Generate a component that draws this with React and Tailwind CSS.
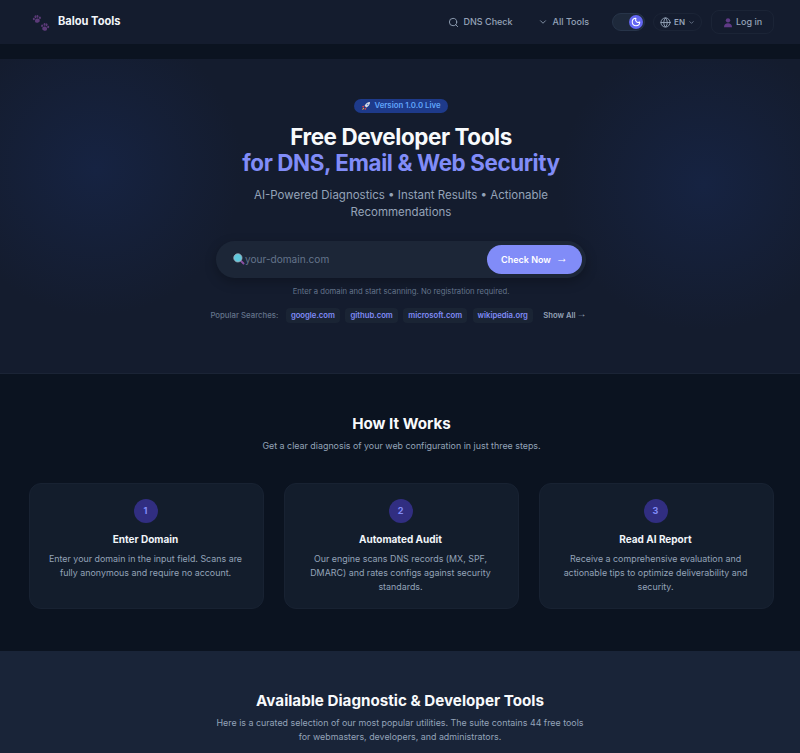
import { Search, ChevronDown, Globe, Moon } from "lucide-react";

function Paw({ className }) {
  return (
    <svg viewBox="0 0 24 24" className={className} fill="#5b3a78">
      <ellipse cx="12" cy="16" rx="6" ry="5" />
      <ellipse cx="4.5" cy="10.5" rx="2.4" ry="3.2" />
      <ellipse cx="9.5" cy="6" rx="2.4" ry="3.4" />
      <ellipse cx="14.5" cy="6" rx="2.4" ry="3.4" />
      <ellipse cx="19.5" cy="10.5" rx="2.4" ry="3.2" />
    </svg>
  );
}

function Rocket() {
  return (
    <svg viewBox="0 0 16 16" className="w-[10px] h-[10px]">
      <path d="M14.5 1.5c-4 .2-7 2.2-8.7 6l2.7 2.7c3.8-1.700 5.800-4.700 6-8.700z" fill="#d7dce6" />
      <circle cx="10.500" cy="5.500" r="1.300" fill="#4b7bd8" />
      <path d="M5.800 7.500 2.500 8l-1 2 3-.2zM8.500 10.200 8 13.500l-2 1 .2-3z" fill="#d9434f" />
      <path d="M3.800 10.500 1.500 14.500l4-2.300z" fill="#f0a23c" />
    </svg>
  );
}

function Magnifier() {
  return (
    <svg viewBox="0 0 16 16" className="w-[12px] h-[12px] shrink-0">
      <path d="M9.500 9.500 14 14" stroke="#8a4fa3" strokeWidth="2.600" strokeLinecap="round" />
      <circle cx="6.500" cy="6.500" r="5.500" fill="#5fc8dc" />
      <circle cx="6.500" cy="6.500" r="5.500" fill="none" stroke="#a9b4c2" strokeWidth="1" />
    </svg>
  );
}

function UserGlyph() {
  return (
    <svg viewBox="0 0 16 16" className="w-[10px] h-[11px]" fill="#5f3a86">
      <circle cx="8" cy="4.500" r="3.500" />
      <path d="M1.500 15.500c0-4.500 2.800-6.500 6.500-6.500s6.500 2 6.500 6.500z" />
    </svg>
  );
}

const popular = ["google.com", "github.com", "microsoft.com", "wikipedia.org"];

const steps = [
  {
    n: 1,
    title: "Enter Domain",
    text: "Enter your domain in the input field. Scans are fully anonymous and require no account.",
  },
  {
    n: 2,
    title: "Automated Audit",
    text: "Our engine scans DNS records (MX, SPF, DMARC) and rates configs against security standards.",
  },
  {
    n: 3,
    title: "Read AI Report",
    text: "Receive a comprehensive evaluation and actionable tips to optimize deliverability and security.",
  },
];

export default function App() {
  return (
    <div className="h-[753px] overflow-hidden bg-[#0b1320] font-['Inter',sans-serif]">
      <header className="h-[44px] bg-[#141c2e] flex items-center justify-between pl-[30px] pr-[26px]">
        <div className="flex items-center gap-[8px]">
          <div className="relative w-[20px] h-[20px]">
            <Paw className="absolute left-[2px] top-[2px] w-[10px] h-[10px] -rotate-12" />
            <Paw className="absolute left-[10px] top-[10px] w-[10px] h-[10px] rotate-12" />
          </div>
          <span className="text-[11.100px] font-bold text-[#f1f5f9] -translate-y-px">Balou Tools</span>
        </div>
        <div className="flex items-center">
          <a className="flex items-center gap-[5px] text-[9px] font-medium text-[#94a3b8]">
            <Search size={11} strokeWidth={2} />
            DNS Check
          </a>
          <a className="flex items-center gap-[5px] ml-[25px] text-[9px] font-medium text-[#94a3b8]">
            <ChevronDown size={10} strokeWidth={2} />
            All Tools
          </a>
          <div className="ml-[23px] w-[33px] h-[18px] rounded-full bg-[#1e293b] border border-[#273449] flex items-center justify-end pr-[1px]">
            <div className="w-[14px] h-[14px] rounded-full bg-[#6366f1] flex items-center justify-center">
              <Moon size={10} strokeWidth={2.500} className="text-white" />
            </div>
          </div>
          <div className="ml-[8px] h-[18px] px-[6px] rounded-full border border-[#1b2436] flex items-center gap-[3px] text-[8px] font-semibold text-[#94a3b8]">
            <Globe size={11} />
            EN
            <ChevronDown size={7} />
          </div>
          <div className="ml-[9px] h-[24px] w-[63px] rounded-lg border border-[#1b2436] flex items-center justify-center gap-[3px] text-[9px] font-medium text-[#94a3b8]">
            <UserGlyph />
            Log in
          </div>
        </div>
      </header>

      <div className="h-[15px] bg-[#0b1320]" />

      <section className="h-[315px] bg-[#141c2e] bg-[radial-gradient(circle_at_12%_35%,#162342_0%,transparent_20%),radial-gradient(circle_at_88%_40%,#162342_0%,transparent_20%)] border-b border-[#1b2436] flex flex-col items-center pl-[2px] pt-[40px]">
        <div className="h-[14px] w-[94px] rounded-full bg-[#1e3a8a] flex items-center justify-center gap-[3px] text-[7.800px] font-semibold text-[#60a5fa]">
          <Rocket />
          Version 1.0.0 Live
        </div>
        <h1 className="mt-[11px] text-center text-[22.400px] leading-[26px] font-bold tracking-[-0.4px] text-[#f8fafc]">
          <span className="block">Free Developer Tools</span>
          <span className="block text-[#818cf8]">for DNS, Email &amp; Web Security</span>
        </h1>
        <p className="mt-[11px] w-[340px] text-center text-[11.500px] leading-[17px] text-[#94a3b8]">
          AI-Powered Diagnostics • Instant Results • Actionable Recommendations
        </p>
        <div className="mt-[20px] w-[370px] h-[37px] rounded-full bg-[#1c2637] shadow-[0_4px_12px_rgba(0,0,0,0.25)] flex items-center justify-between pl-[17px] pr-[4px]">
          <div className="flex items-center text-[10.100px] text-[#64748b]">
            <Magnifier />
            your-domain.com
          </div>
          <button className="w-[95px] h-[29px] rounded-full bg-[#818cf8] flex items-center justify-center gap-[5px] text-[9px] font-semibold text-white">
            Check Now
            <span className="font-['Liberation_Sans',sans-serif] font-bold text-[12px] leading-none -translate-y-[2px]">→</span>
          </button>
        </div>
        <p className="mt-[8px] text-[7.700px] leading-[12px] text-[#64748b]">
          Enter a domain and start scanning. No registration required.
        </p>
        <div className="mt-[10px] -ml-[5px] flex items-center gap-[5.500px] text-[7.700px]">
          <span className="mr-[2px] text-[7.800px] text-[#64748b] font-medium">Popular Searches:</span>
          {popular.map((d) => (
            <span key={d} className="h-[15px] px-[5px] rounded bg-[#1a2434] flex items-center font-semibold text-[#818cf8]">
              {d}
            </span>
          ))}
          <span className="ml-[5px] flex items-center gap-[1px] font-semibold text-[#94a3b8]">
            Show All
            <span className="font-['Liberation_Sans',sans-serif] font-bold text-[10px] leading-none -translate-y-[1px]">→</span>
          </span>
        </div>
      </section>

      <section className="h-[277px] bg-[#0b1320] pl-[29px] pr-[26px] pt-[41px]">
        <h2 className="text-center text-[15.200px] leading-[18px] font-bold text-[#f8fafc]">How It Works</h2>
        <p className="mt-[6px] text-center text-[8.900px] leading-[14px] text-[#94a3b8]">
          Get a clear diagnosis of your web configuration in just three steps.
        </p>
        <div className="mt-[30px] grid grid-cols-3 gap-[20px]">
          {steps.map((s) => (
            <div key={s.n} className="h-[126px] rounded-xl bg-[#131d2c] border border-[#182232] flex flex-col items-center pl-[15px] pr-[17px] pt-[15px]">
              <div className="w-[24px] h-[24px] rounded-full bg-[#312e81] flex items-center justify-center text-[9px] font-bold text-[#818cf8]">
                {s.n}
              </div>
              <h3 className="mt-[9px] text-[10px] leading-[15px] font-bold text-[#f1f5f9]">{s.title}</h3>
              <p className="mt-[5px] text-center text-[8.900px] leading-[14px] text-[#94a3b8]">{s.text}</p>
            </div>
          ))}
        </div>
      </section>

      <section className="bg-[#192438] pt-[41px] pb-[40px] flex flex-col items-center">
        <h2 className="text-[15.200px] leading-[18px] font-bold text-[#f8fafc]">Available Diagnostic &amp; Developer Tools</h2>
        <p className="mt-[6px] w-[375px] text-center text-[8.900px] leading-[14px] text-[#94a3b8]">
          Here is a curated selection of our most popular utilities. The suite contains 44 free tools for webmasters, developers, and administrators.
        </p>
      </section>
    </div>
  );
}
